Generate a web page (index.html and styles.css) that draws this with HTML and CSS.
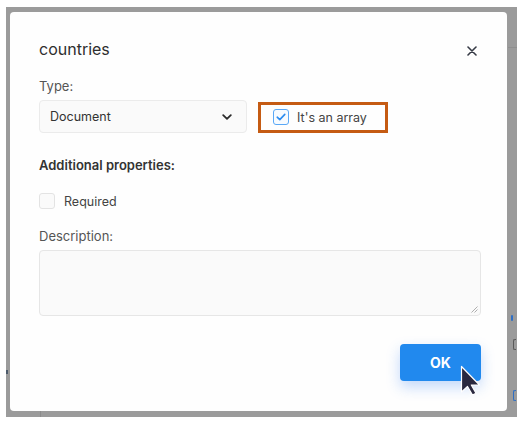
FILE: index.html
```html
<!DOCTYPE html>
<html>
<head>
<meta charset="utf-8">
<link rel="stylesheet" href="styles.css">
</head>
<body>
<div class="backdrop">
  <span class="bg-mark bg-line-top"></span>
  <span class="bg-mark bg-line-bottom"></span>
  <span class="bg-mark bg-dot-blue"></span>
  <span class="bg-mark bg-bracket-grey"></span>
  <span class="bg-mark bg-bracket-blue"></span>
  <span class="bg-mark bg-left-mark"></span>
  <div class="modal">
    <div class="modal-header">
      <h2 class="modal-title">countries</h2>
      <button class="close-btn" aria-label="Close">
        <svg width="10" height="10" viewBox="0 0 10 10"><path d="M1 1L9 9M9 1L1 9" stroke="#363a45" stroke-width="1.6" stroke-linecap="round"/></svg>
      </button>
    </div>
    <div class="field-label">Type:</div>
    <div class="type-row">
      <div class="select">
        <span class="select-value">Document</span>
        <svg class="chevron" width="10" height="6" viewBox="0 0 10 6"><path d="M1.2 1.2L5 4.8L8.8 1.2" fill="none" stroke="#2b2b2b" stroke-width="1.8" stroke-linecap="round" stroke-linejoin="round"/></svg>
      </div>
      <label class="array-check">
        <span class="checkbox checked">
          <svg width="10" height="8" viewBox="0 0 10 8"><path d="M1.2 4.2L3.8 6.6L8.8 1.4" fill="none" stroke="#2b8cf0" stroke-width="1.6" stroke-linecap="round" stroke-linejoin="round"/></svg>
        </span>
        <span class="check-text">It's an array</span>
      </label>
    </div>
    <div class="section-title">Additional properties:</div>
    <label class="required-row">
      <span class="checkbox"></span>
      <span class="check-text">Required</span>
    </label>
    <div class="field-label desc-label">Description:</div>
    <div class="textarea">
      <svg class="resize" width="8" height="8" viewBox="0 0 8 8"><path d="M7.5 1.5L1.5 7.5M7.5 4.5L4.5 7.5" stroke="#9a9a9a" stroke-width="0.8"/></svg>
    </div>
    <div class="modal-footer">
      <button class="ok-btn">OK</button>
      <svg class="cursor" width="22" height="31" viewBox="0 0 22 31"><path d="M1.5 1.5L1.5 27L7.5 21.5L12.5 30L16 28.3L11.3 20L19.5 20Z" fill="#2a2940" stroke="#ffffff" stroke-width="1.2" stroke-linejoin="round"/></svg>
    </div>
  </div>
</div>
</body>
</html>
```
FILE: styles.css
```css
* { box-sizing: border-box; }
html, body { margin: 0; padding: 0; background: #ffffff; }
body {
  font-family: Inter, "Noto Sans", "Liberation Sans", sans-serif;
  color: #333333;
  width: 531px;
  height: 426px;
  overflow: hidden;
}
.backdrop {
  position: relative;
  margin: 7px 14px 0 6px;
  width: 511px;
  height: 410px;
  background: #9b9b9b;
  padding: 5px 10px 6px 4px;
}
.bg-mark { position: absolute; display: block; }
.bg-line-top { right: 0; top: 40px; width: 9px; height: 1px; background: #8f8f8f; }
.bg-line-bottom { left: 34px; bottom: 0; width: 1px; height: 6px; background: #8c8c8c; }
.bg-left-mark { left: 0; top: 363px; width: 2px; height: 4px; background: #4c5a6a; }
.bg-dot-blue { right: 4px; top: 308px; width: 2px; height: 6px; background: #2f6fc4; border-radius: 1px; }
.bg-bracket-grey { right: 1px; top: 332px; width: 3px; height: 11px; border: 1px solid #5a5a5a; border-right: none; border-radius: 2px 0 0 2px; }
.bg-bracket-blue { right: 1px; top: 383px; width: 3px; height: 11px; border: 1px solid #2f6fc4; border-right: none; border-radius: 2px 0 0 2px; }

.modal {
  position: relative;
  background: #fefefe;
  border-radius: 4px;
  width: 497px;
  height: 399px;
  padding: 25px 26px 0 29px;
  display: flex;
  flex-direction: column;
}
.modal-header {
  display: flex;
  align-items: center;
  justify-content: space-between;
  height: 24px;
}
.modal-title {
  margin: 0;
  font-size: 16px;
  font-weight: 400;
  line-height: 24px;
  color: #2e2e2e;
}
.close-btn {
  border: none;
  background: none;
  padding: 0;
  margin-right: 4px;
  width: 10px;
  height: 10px;
  display: flex;
  margin-top: 3px;
}
.field-label {
  margin-top: 17px;
  font-size: 13px;
  line-height: 16px;
  color: #555555;
}
.type-row {
  margin-top: 6px;
  display: flex;
  align-items: center;
  gap: 11px;
}
.select {
  width: 208px;
  height: 33px;
  background: #fafafa;
  border: 1px solid #ebebeb;
  border-radius: 4px;
  display: flex;
  align-items: center;
  justify-content: space-between;
  padding: 0 14px 0 10px;
}
.select-value { font-size: 12.5px; color: #333333; }
.array-check {
  display: flex;
  align-items: center;
  gap: 8px;
  height: 31px;
  width: 130px;
  margin-top: 1px;
  border: 3px solid #c55b13;
  padding-left: 12px;
}
.checkbox {
  width: 16px;
  height: 16px;
  border: 1px solid #e3e3e3;
  background: #fafafa;
  border-radius: 3px;
  display: flex;
  align-items: center;
  justify-content: center;
  flex: none;
}
.checkbox.checked {
  border: 1.5px solid #5aa8f6;
  background: #f7fbff;
}
.check-text { font-size: 12.5px; color: #444444; }
.section-title {
  margin-top: 24px;
  font-size: 13px;
  line-height: 16px;
  font-weight: 600;
  color: #333333;
}
.required-row {
  margin-top: 20px;
  display: flex;
  align-items: center;
  gap: 9px;
  height: 16px;
}
.desc-label { margin-top: 19px; }
.textarea {
  margin-top: 6px;
  width: 442px;
  height: 66px;
  background: #fafafa;
  border: 1px solid #e6e6e6;
  border-radius: 4px;
  position: relative;
}
.resize { position: absolute; right: 2px; bottom: 2px; }
.modal-footer {
  margin-top: 28px;
  width: 442px;
  display: flex;
  justify-content: flex-end;
  position: relative;
}
.ok-btn {
  width: 81px;
  height: 37px;
  border: none;
  border-radius: 4px;
  background: #2189ee;
  color: #ffffff;
  font-family: Inter, "Noto Sans", "Liberation Sans", sans-serif;
  font-size: 14px;
  font-weight: 700;
  box-shadow: 0 6px 14px rgba(40, 120, 240, 0.28);
}
.cursor { position: absolute; left: 421px; top: 21px; }
```
